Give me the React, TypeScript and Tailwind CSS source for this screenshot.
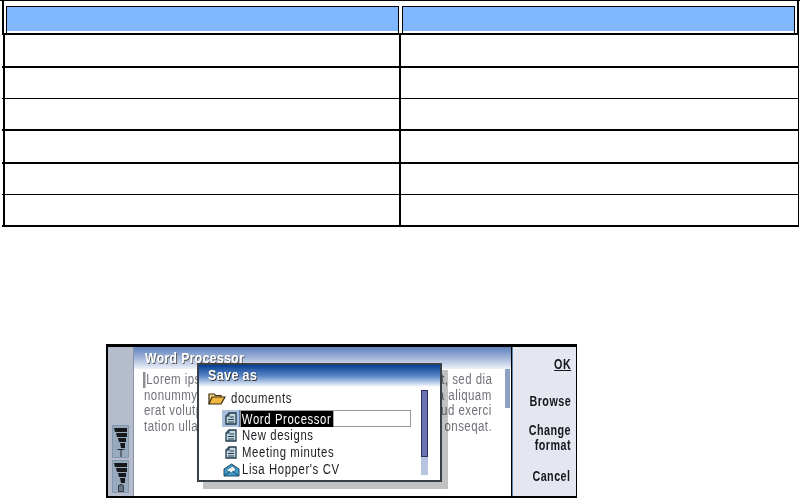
const rows = [0, 1, 2, 3, 4, 5];
const rowHeights = ["h-[33px]", "h-[31px]", "h-[32px]", "h-[33px]", "h-[31px]", "h-[32px]"];
const rowBorders = ["border-b-2", "border-b", "border-b-2", "border-b-2", "border-b", "border-b-2"];

// parts of the body text that stick out from behind the dialog
const bodyLines = [
  ["Lorem ips", "t, sed dia"],
  ["nonummy", "a aliquam"],
  ["erat volutp", "ud exerci"],
  ["tation ulla", "onseqat."],
];

function DocIcon() {
  return (
    <svg width="12" height="13" viewBox="0 0 12 13">
      <path d="M4 1H11V12H1V4Z" fill="#c5d6e0" stroke="#1d3a4a" strokeWidth="1.3" />
      <path d="M4 1V4H1" fill="#5d8298" stroke="#1d3a4a" />
      <path d="M4.5 5H9M3 7.5H9M3 10H9" stroke="#1d3a4a" strokeWidth="1.2" />
    </svg>
  );
}

function FolderIcon() {
  return (
    <svg width="18" height="13" viewBox="0 0 18 13">
      <path d="M1 12V2H6L7.5 3.5H13V5" fill="#f5d98a" stroke="#3d2c10" strokeWidth="1.2" />
      <path d="M1 12L4 5H17L13 12Z" fill="#f0b840" stroke="#3d2c10" strokeWidth="1.2" />
    </svg>
  );
}

function MailIcon() {
  return (
    <svg width="17" height="14" viewBox="0 0 17 14">
      <path d="M1 6L8.5 1L16 6V13H1Z" fill="#3d9fd0" stroke="#1c4660" />
      <path d="M3 7L10 3L13 7L8 10Z" fill="#e8f2f6" stroke="#1c4660" strokeWidth="0.6" />
      <path d="M1 13L7 8.5M16 13L9.5 8.5" stroke="#1c4660" />
    </svg>
  );
}

function SignalBars() {
  return (
    <svg width="13" height="20" viewBox="0 0 13 20">
      <path d="M0 0H13V4H1ZM2 5H13V9H3ZM4 10H12V14H5ZM6 15H11V20H7Z" fill="#17181c" />
    </svg>
  );
}

function Indicator({ children }: { children: React.ReactNode }) {
  return (
    <div className="w-[17px] h-[33px] bg-[#96a9bd] border border-[#8296ad] flex flex-col items-center pt-[2px] gap-[1px]">
      <SignalBars />
      {children}
    </div>
  );
}

function Softkey({ children, className = "" }: { children: React.ReactNode; className?: string }) {
  return (
    <div className={`absolute right-[5px] text-right font-bold text-[14px] leading-[15px] tracking-[0.6px] text-[#15171c] scale-x-[0.77] origin-right ${className}`}>
      {children}
    </div>
  );
}

function FileRow({ name, icon, selected }: { name: string; icon: React.ReactNode; selected?: boolean }) {
  return (
    <div className="h-[17px] flex items-center">
      <div className={`w-[18px] h-[17px] flex items-center justify-center ${selected ? "bg-[#a9bfdc] border-r border-[#5a7cb0]" : ""}`}>
        {icon}
      </div>
      <div className={`flex-1 h-[17px] flex items-center ${selected ? "border border-[#9a9a9a]" : ""}`}>
        <span className={`inline-block scale-x-[0.81] origin-left tracking-[0.75px] ${selected ? "bg-black text-white pl-[1px] pr-[2px]" : "ml-[2px] pb-[1px] text-[#1a1c20]"}`}>
          {name}
        </span>
      </div>
    </div>
  );
}

export default function App() {
  return (
    <div className="w-[800px] h-[500px] bg-white overflow-hidden font-['Liberation_Sans',sans-serif]">
      {/* table */}
      <div className="h-[250px] pl-[2px] pr-[1px] border-t border-black">
        <div className="h-[34px] border-x-2 border-b-2 border-black pl-[2px] pr-[2px] pt-[5px] flex">
          <div className="flex-1 h-[27px] bg-[#80b7ff] border-t border-l border-r border-black border-b-0 shadow-[inset_0_-2px_0_white]" />
          <div className="w-[3px]" />
          <div className="flex-1 h-[27px] bg-[#80b7ff] border-t border-l border-r border-black border-b-0 shadow-[inset_0_-2px_0_white]" />
        </div>
        {rows.map((i) => (
          <div key={i} className={`${rowHeights[i]} ${rowBorders[i]} border-black flex`}>
            <div className="w-[398px] ml-[1px] border-l-2 border-r-2 border-black" />
            <div className="flex-1 border-r border-black" />
          </div>
        ))}
      </div>

      {/* device */}
      <div className="mt-[94px] ml-[106px] w-[471px] h-[154px] bg-black pt-[3px] pb-[2px] pl-[2px] pr-[1px] flex text-[14px] leading-[16px] blur-[0.35px]">
        <div className="w-[26px] bg-[#b5bdcc] flex flex-col justify-end items-center pb-[3px] gap-[2px] border-r border-[#8893a8]">
          <Indicator>
            <svg width="8" height="8" viewBox="0 0 8 8">
              <path d="M0.5 0.5H7.5M4 0.5V8" stroke="#24282e" />
            </svg>
          </Indicator>
          <Indicator>
            <svg width="6" height="8" viewBox="0 0 6 8">
              <path d="M2 0.5H4V1.5H5.5V7.5H0.5V1.5H2Z" fill="#6b7684" stroke="#24282e" strokeWidth="0.8" />
            </svg>
          </Indicator>
        </div>

        <div className="relative w-[378px] bg-white border-r border-black">
          <div className="h-[22px] bg-gradient-to-b from-[#5f80bc] via-[#a3b6d9] to-[#eef1f8] pl-[11px] font-bold text-[15px] leading-[21px] tracking-[0.5px] text-white [text-shadow:1px_1px_0_#555]">
            <span className="inline-block scale-x-[0.81] origin-left">Word Processor</span>
          </div>
          <div className="pl-[10px] pr-[19px] pt-[3px] text-[#6f7278] leading-[15.5px] tracking-[0.55px]">
            {bodyLines.map(([left, right], i) => (
              <div key={left} className="flex justify-between whitespace-nowrap">
                <span className={`inline-block scale-x-[0.82] origin-left ${i === 0 ? "border-l-[3px] border-[#8b8f96] pl-[1px] -ml-[1px]" : ""}`}>{left}</span>
                <span className="inline-block scale-x-[0.82] origin-right">{right}</span>
              </div>
            ))}
          </div>
          <div className="absolute right-[1px] top-[22px] w-[5px] h-[39px] bg-[#8ea0c4]" />

          {/* Save as dialog */}
          <div className="absolute left-[63px] top-[16px] w-[245px] h-[119px] bg-white border-2 border-[#3a4048] shadow-[6px_7px_0_rgba(0,0,0,0.24)]">
            <div className="h-[22px] bg-gradient-to-b from-[#003f94] via-[#5a86c4] to-white pl-[9px] font-bold text-[15px] leading-[20px] tracking-[0.5px] text-white [text-shadow:1px_1px_0_#333]">
              <span className="inline-block scale-x-[0.83] origin-left">Save as</span>
            </div>
            <div className="relative pt-[4px] pl-[9px] pr-[29px]">
              <div className="h-[16px] flex items-center gap-[5px] pb-[2px]">
                <FolderIcon />
                <span className="inline-block scale-x-[0.81] origin-left tracking-[0.75px] text-[#1a1c20]">documents</span>
              </div>
              <div className="pl-[14px] pt-[3px]">
                <FileRow name="Word Processor" icon={<DocIcon />} selected />
                <FileRow name="New designs" icon={<DocIcon />} />
                <FileRow name="Meeting minutes" icon={<DocIcon />} />
                <FileRow name="Lisa Hopper's CV" icon={<MailIcon />} />
              </div>
              <div className="absolute right-[12px] top-[3px] w-[7px] h-[85px] bg-[#b8c3e0]">
                <div className="h-[67px] bg-[#6a74b0] border border-[#2c3060]" />
              </div>
            </div>
          </div>
        </div>

        <div className="relative flex-1 bg-[#e4e7ef] border-l border-[#5f86a8]">
          <Softkey className="top-[10px] underline">OK</Softkey>
          <Softkey className="top-[47px]">Browse</Softkey>
          <Softkey className="top-[76px]">Change<br />format</Softkey>
          <Softkey className="top-[122px]">Cancel</Softkey>
        </div>
      </div>
    </div>
  );
}
